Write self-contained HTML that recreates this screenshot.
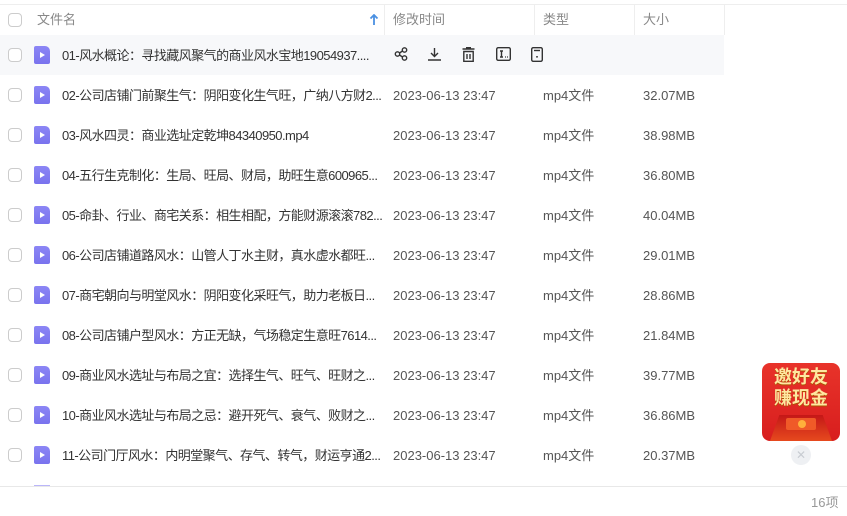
<!DOCTYPE html>
<html><head><meta charset="utf-8"><style>
*{margin:0;padding:0;box-sizing:border-box}
body{width:847px;height:516px;background:#fff;font-family:"Liberation Sans","Noto Sans CJK SC",sans-serif;font-size:13px;color:#333;position:relative;overflow:hidden}
div,span{line-height:16px}
.top{position:absolute;left:0;top:4px;width:847px;height:1px;background:#eee}
.hdr{position:absolute;top:5px;left:0;width:847px;height:30px;color:#888;font-size:13px}
.hdr span{position:absolute;top:7px}
.sep{position:absolute;top:5px;width:1px;height:30px;background:#eee}
.cb{position:absolute;left:8px;width:14px;height:14px;border:1px solid #ccc;border-radius:4px;background:#fff}
.row{position:absolute;left:0;width:847px;height:40px}
.row .cb{top:13px}
.ic{position:absolute;left:34px;top:11px;width:16px;height:18px;border-radius:2px 5px 2px 2px;background:linear-gradient(#8c86f5,#7a73ee)}
.ic:after{content:"";position:absolute;left:6px;top:6px;border-left:5px solid #fff;border-top:3px solid transparent;border-bottom:3px solid transparent}
.nm{position:absolute;left:62px;top:13px;color:#333;white-space:nowrap;letter-spacing:-0.55px}
.t{position:absolute;left:393px;top:13px;color:#555;white-space:nowrap}
.ty{position:absolute;left:543px;top:13px;color:#555;white-space:nowrap}
.sz{position:absolute;left:643px;top:13px;color:#555}
.act svg{position:absolute;top:12px}
</style></head><body>
<div class="top"></div>
<div class="hdr">
<div class="cb" style="top:8px"></div>
<span style="left:37px">文件名</span>
<svg style="position:absolute;left:369px;top:9px" width="10" height="12" viewBox="0 0 10 12"><path d="M5 1v10M1.5 4.5L5 1l3.5 3.5" stroke="#4a90e2" stroke-width="1.8" fill="none"/></svg>
<span style="left:393px">修改时间</span><span style="left:543px">类型</span><span style="left:643px">大小</span>
</div>
<div class="sep" style="left:384px"></div><div class="sep" style="left:534px"></div><div class="sep" style="left:634px"></div><div class="sep" style="left:724px"></div>

<div class="row" style="top:35px;background:#f7f8fa;width:724px">
<div class="cb"></div><div class="ic"></div><div class="nm">01-风水概论：寻找藏风聚气的商业风水宝地19054937....</div>
<div class="act">
<svg style="left:394px" width="14" height="14" viewBox="0 0 14 14" fill="none" stroke="#333" stroke-width="1.4"><circle cx="3.5" cy="7" r="2.2"/><circle cx="10.5" cy="3" r="2.2"/><circle cx="10.5" cy="11" r="2.2"/><path d="M5.5 6l3-2M5.5 8l3 2"/></svg>
<svg style="left:427px" width="15" height="14" viewBox="0 0 15 14" fill="none" stroke="#333" stroke-width="1.4"><path d="M7.5 1v8M4 6l3.5 3.5L11 6M1 13h13"/></svg>
<svg style="left:462px" width="13" height="15" viewBox="0 0 13 15" fill="none" stroke="#333" stroke-width="1.4"><path d="M0.5 2h12M4 0.7h5M1.8 4.5h9.4v9.8H1.8zM5 7v5M8 7v5"/></svg>
<svg style="left:496px" width="15" height="14" viewBox="0 0 15 14" fill="none" stroke="#333" stroke-width="1.4"><rect x="0.7" y="0.7" width="13.6" height="12.6" rx="1.5"/><path d="M4 4h3M5.5 4v6M4 10h3"/><path d="M9 10h0.8M11 10h0.8"/></svg>
<svg style="left:531px" width="12" height="15" viewBox="0 0 12 15" fill="none" stroke="#333" stroke-width="1.4"><rect x="0.7" y="0.7" width="10.6" height="13.6" rx="1.5"/><path d="M3 3.5h6"/><rect x="5.2" y="9" width="1.6" height="1.6" fill="#333" stroke="none"/></svg>
</div></div>

<div class="row" style="top:75px"><div class="cb"></div><div class="ic"></div><div class="nm">02-公司店铺门前聚生气：阴阳变化生气旺，广纳八方财2...</div><div class="t">2023-06-13 23:47</div><div class="ty">mp4文件</div><div class="sz">32.07MB</div></div>
<div class="row" style="top:115px"><div class="cb"></div><div class="ic"></div><div class="nm">03-风水四灵：商业选址定乾坤84340950.mp4</div><div class="t">2023-06-13 23:47</div><div class="ty">mp4文件</div><div class="sz">38.98MB</div></div>
<div class="row" style="top:155px"><div class="cb"></div><div class="ic"></div><div class="nm">04-五行生克制化：生局、旺局、财局，助旺生意600965...</div><div class="t">2023-06-13 23:47</div><div class="ty">mp4文件</div><div class="sz">36.80MB</div></div>
<div class="row" style="top:195px"><div class="cb"></div><div class="ic"></div><div class="nm">05-命卦、行业、商宅关系：相生相配，方能财源滚滚782...</div><div class="t">2023-06-13 23:47</div><div class="ty">mp4文件</div><div class="sz">40.04MB</div></div>
<div class="row" style="top:235px"><div class="cb"></div><div class="ic"></div><div class="nm">06-公司店铺道路风水：山管人丁水主财，真水虚水都旺...</div><div class="t">2023-06-13 23:47</div><div class="ty">mp4文件</div><div class="sz">29.01MB</div></div>
<div class="row" style="top:275px"><div class="cb"></div><div class="ic"></div><div class="nm">07-商宅朝向与明堂风水：阴阳变化采旺气，助力老板日...</div><div class="t">2023-06-13 23:47</div><div class="ty">mp4文件</div><div class="sz">28.86MB</div></div>
<div class="row" style="top:315px"><div class="cb"></div><div class="ic"></div><div class="nm">08-公司店铺户型风水：方正无缺，气场稳定生意旺7614...</div><div class="t">2023-06-13 23:47</div><div class="ty">mp4文件</div><div class="sz">21.84MB</div></div>
<div class="row" style="top:355px"><div class="cb"></div><div class="ic"></div><div class="nm">09-商业风水选址与布局之宜：选择生气、旺气、旺财之...</div><div class="t">2023-06-13 23:47</div><div class="ty">mp4文件</div><div class="sz">39.77MB</div></div>
<div class="row" style="top:395px"><div class="cb"></div><div class="ic"></div><div class="nm">10-商业风水选址与布局之忌：避开死气、衰气、败财之...</div><div class="t">2023-06-13 23:47</div><div class="ty">mp4文件</div><div class="sz">36.86MB</div></div>
<div class="row" style="top:435px"><div class="cb"></div><div class="ic"></div><div class="nm">11-公司门厅风水：内明堂聚气、存气、转气，财运亨通2...</div><div class="t">2023-06-13 23:47</div><div class="ty">mp4文件</div><div class="sz">20.37MB</div></div>
<div style="position:absolute;left:34px;top:485px;width:16px;height:2px;background:#8c86f5;opacity:.6"></div>
<div style="position:absolute;left:0;top:486px;width:847px;height:1px;background:#e8e8e8"></div>
<div style="position:absolute;left:811px;top:495px;color:#999;font-size:13px">16项</div>

<div style="position:absolute;left:762px;top:363px;width:78px;height:78px;border-radius:8px;background:linear-gradient(#e8332a,#d81e1e);overflow:hidden">
<div style="position:absolute;left:0;top:4px;width:78px;text-align:center;color:#ffe7a0;font-weight:bold;font-size:18px;line-height:21px;text-shadow:0 1px 0 #a50">邀好友<br>赚现金</div>
<div style="position:absolute;left:8px;top:52px;width:62px;height:26px;background:linear-gradient(#c41717,#e64a1e);clip-path:polygon(15% 0,85% 0,100% 100%,0 100%)"></div>
<div style="position:absolute;left:24px;top:55px;width:30px;height:12px;background:#f05a28;border-radius:2px"></div>
<div style="position:absolute;left:36px;top:57px;width:8px;height:8px;border-radius:50%;background:#ffb13b"></div>
</div>
<div style="position:absolute;left:791px;top:445px;width:20px;height:20px;border-radius:50%;background:#eef0f3;color:#c8ccd2;font-size:12px;text-align:center;line-height:20px">✕</div>
</body></html>
